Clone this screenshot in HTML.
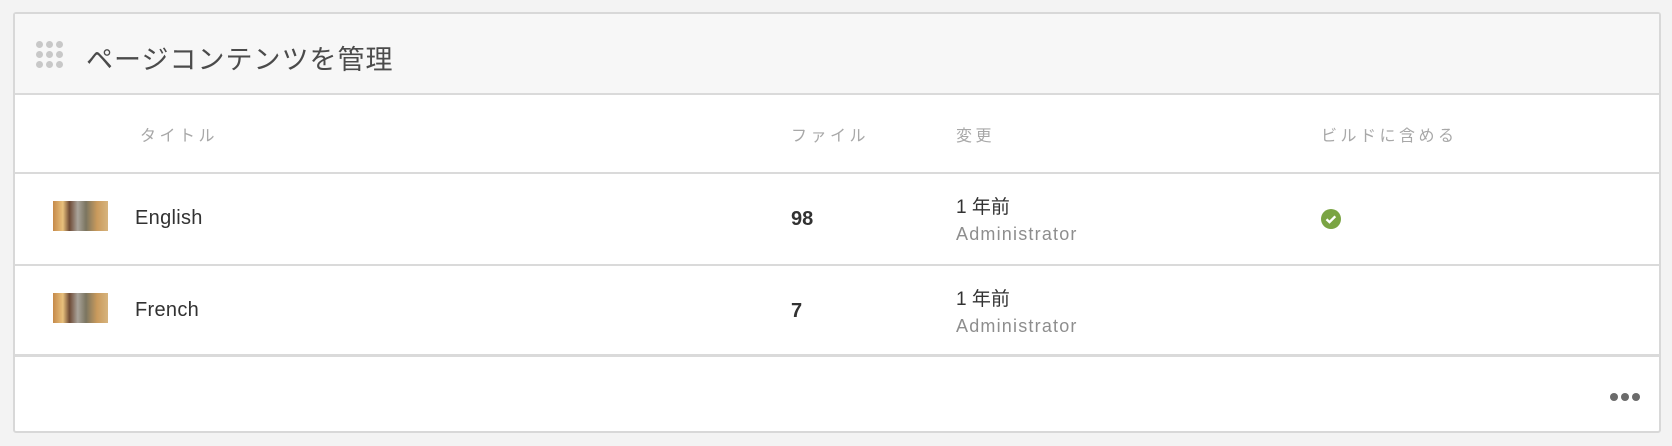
<!DOCTYPE html>
<html><head><meta charset="utf-8"><style>
*{margin:0;padding:0;box-sizing:border-box}
body{width:1672px;height:446px;background:#f3f3f3;font-family:"Liberation Sans","Noto Sans CJK JP",sans-serif;position:relative;overflow:hidden}
.card{position:absolute;left:13px;top:12px;width:1648px;height:421px;background:#fff;border:2px solid #d8d8d8;border-radius:3px}
.hdr{position:absolute;left:15px;top:14px;width:1644px;height:80px;background:#f7f7f7}
.dots{position:absolute;left:36px;top:41px}
.dots i{position:absolute;width:7px;height:7px;border-radius:50%;background:#c8c8c8}
.title{position:absolute;left:86px;top:38px;font-size:27px;color:#4b4b4b;letter-spacing:1px;white-space:nowrap}
.t{position:absolute;white-space:nowrap}
.colh{font-size:16px;color:#a8a8a8;letter-spacing:3.5px;top:122px}
.line{position:absolute;left:15px;width:1644px;height:2px;background:#dadada}
.name{font-size:20px;color:#323232;letter-spacing:0.3px}
.num{font-size:20px;color:#323232;font-weight:bold}
.date{font-size:19px;color:#333}
.adm{font-size:18px;color:#8e8e8e;letter-spacing:1.2px}
.thumb{position:absolute;width:55px;height:30px;background:linear-gradient(90deg,#c58a4a 0%,#e8c07c 18%,#6e4a36 30%,#a9a39a 45%,#7b7560 60%,#c99a5c 80%,#d7b47e 100%)}
.check{position:absolute;left:1321px;top:209px;width:20px;height:20px;border-radius:50%;background:#7aa443}
.more i{position:absolute;width:8px;height:8px;border-radius:50%;background:#6b6b6b;top:393px}
</style></head><body>
<div class="card"></div>
<div class="hdr"></div>
<div class="dots">
 <i style="left:0;top:0"></i><i style="left:10px;top:0"></i><i style="left:20px;top:0"></i>
 <i style="left:0;top:10px"></i><i style="left:10px;top:10px"></i><i style="left:20px;top:10px"></i>
 <i style="left:0;top:20px"></i><i style="left:10px;top:20px"></i><i style="left:20px;top:20px"></i>
</div>
<div class="title">ページコンテンツを管理</div>
<div class="line" style="top:93px"></div>
<div class="t colh" style="left:140px">タイトル</div>
<div class="t colh" style="left:791px">ファイル</div>
<div class="t colh" style="left:956px">変更</div>
<div class="t colh" style="left:1321px">ビルドに含める</div>
<div class="line" style="top:172px"></div>
<div class="thumb" style="left:53px;top:201px"></div>
<div class="t name" style="left:135px;top:207px">English</div>
<div class="t num" style="left:791px;top:208px">98</div>
<div class="t date" style="left:956px;top:192px">1 年前</div>
<div class="t adm" style="left:956px;top:224px">Administrator</div>
<div class="check"><svg width="20" height="20" viewBox="0 0 20 20"><path d="M5.5 10.3l3 2.8 5.8-5.8" fill="none" stroke="#fff" stroke-width="2.4"/></svg></div>
<div class="line" style="top:264px"></div>
<div class="thumb" style="left:53px;top:293px"></div>
<div class="t name" style="left:135px;top:299px">French</div>
<div class="t num" style="left:791px;top:300px">7</div>
<div class="t date" style="left:956px;top:284px">1 年前</div>
<div class="t adm" style="left:956px;top:316px">Administrator</div>
<div class="line" style="top:354px;height:3px"></div>
<div class="more">
 <i style="left:1610px"></i><i style="left:1621px"></i><i style="left:1632px"></i>
</div>
</body></html>
